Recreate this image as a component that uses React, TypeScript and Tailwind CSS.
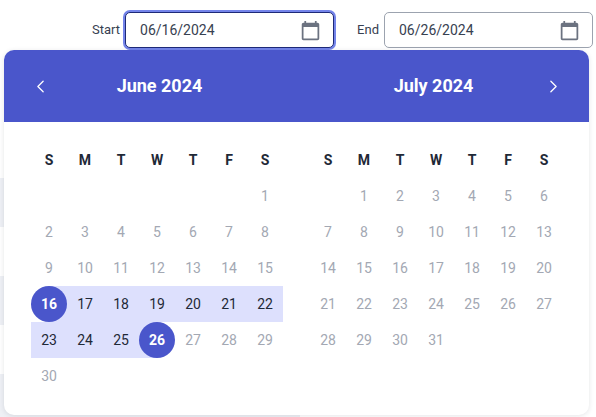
import { ChevronLeft, ChevronRight } from "lucide-react";

const weekdays = ["S", "M", "T", "W", "T", "F", "S"];
const rowTints = [false, true, false, true, false, true];

function CalendarIcon() {
  return (
    <svg width="21" height="21" viewBox="0 0 24 24" fill="#6b7280" className="shrink-0">
      <path d="M20 3h-1V1h-2v2H7V1H5v2H4c-1.1 0-2 .9-2 2v16c0 1.1.9 2 2 2h16c1.1 0 2-.9 2-2V5c0-1.1-.9-2-2-2zm0 18H4V8h16v13z" />
    </svg>
  );
}

function DateField({ value, focused }: { value: string; focused?: boolean }) {
  return (
    <div
      className={`flex h-9 w-[209px] items-center justify-between rounded-[5px] border bg-white pl-[14px] pr-3 text-sm text-[#374151] ${
        focused ? "border-[#1e2a78] ring-2 ring-[#7484ea]" : "border-[#9ca3af]"
      }`}
    >
      <span>{value}</span>
      <CalendarIcon />
    </div>
  );
}

function DayCell({ day, start, end }: { day: number; start: number; end: number }) {
  if (day === start || day === end) {
    const half = day === start ? "left-1/2 right-0" : "left-0 right-1/2";
    return (
      <div className="relative flex h-9 items-center justify-center">
        <span className={`absolute inset-y-0 bg-[#dde0fd] ${half}`} />
        <span className="relative flex size-9 items-center justify-center rounded-full bg-[#4a56cb] font-bold text-white">
          {day}
        </span>
      </div>
    );
  }
  const inRange = day > start && day < end;
  return (
    <div
      className={`flex h-9 items-center justify-center ${
        inRange ? "bg-[#dde0fd] text-[#1f2937]" : "text-[#a3a8b3]"
      }`}
    >
      {day}
    </div>
  );
}

function Month({ blanks, days, start = 0, end = 0 }: { blanks: number; days: number; start?: number; end?: number }) {
  return (
    <div className="grid w-[252px] grid-cols-7 text-sm">
      {weekdays.map((name, i) => (
        <div key={i} className="flex h-9 items-center justify-center font-bold text-[#1f2937]">
          {name}
        </div>
      ))}
      {Array.from({ length: blanks }, (_, i) => (
        <div key={`blank-${i}`} className="h-9" />
      ))}
      {Array.from({ length: days }, (_, i) => (
        <DayCell key={i} day={i + 1} start={start} end={end} />
      ))}
    </div>
  );
}

export default function App() {
  return (
    <div className="relative h-[417px] w-[596px] overflow-hidden bg-white font-['Roboto',sans-serif]">
      <div className="flex h-[60px] items-start justify-end pr-[3px] pt-3 text-[13px] text-[#374151]">
        <div className="flex items-center gap-[5px]">
          <span>Start</span>
          <DateField value="06/16/2024" focused />
        </div>
        <div className="ml-[23px] flex items-center gap-[5px]">
          <span>End</span>
          <DateField value="06/26/2024" />
        </div>
      </div>

      {/* table rows behind the popover */}
      <div className="mt-[118px] w-[300px]">
        {rowTints.map((tint, i) => (
          <div key={i} className={`h-[49px] ${tint ? "bg-white" : "bg-[#eef0f5]"}`} />
        ))}
      </div>

      <div className="absolute left-1 top-[50px] h-[365px] w-[585px] overflow-hidden rounded-[10px] bg-white shadow-[0_1px_5px_rgba(31,41,55,0.12)]">
        <div className="flex h-[72px] items-center bg-[#4a56cb] px-6 text-white">
          <div className="flex w-6 justify-center">
            <ChevronLeft size={21} strokeWidth={1.5} />
          </div>
          <div className="flex-1 text-center text-lg font-bold">June 2024</div>
          <div className="w-[59px]" />
          <div className="flex-1 text-center text-lg font-bold">July 2024</div>
          <div className="flex w-6 justify-center">
            <ChevronRight size={21} strokeWidth={1.5} />
          </div>
        </div>
        <div className="flex items-start gap-[27px] px-[27px] pt-5">
          <Month blanks={6} days={30} start={16} end={26} />
          <Month blanks={1} days={31} />
        </div>
      </div>
    </div>
  );
}
